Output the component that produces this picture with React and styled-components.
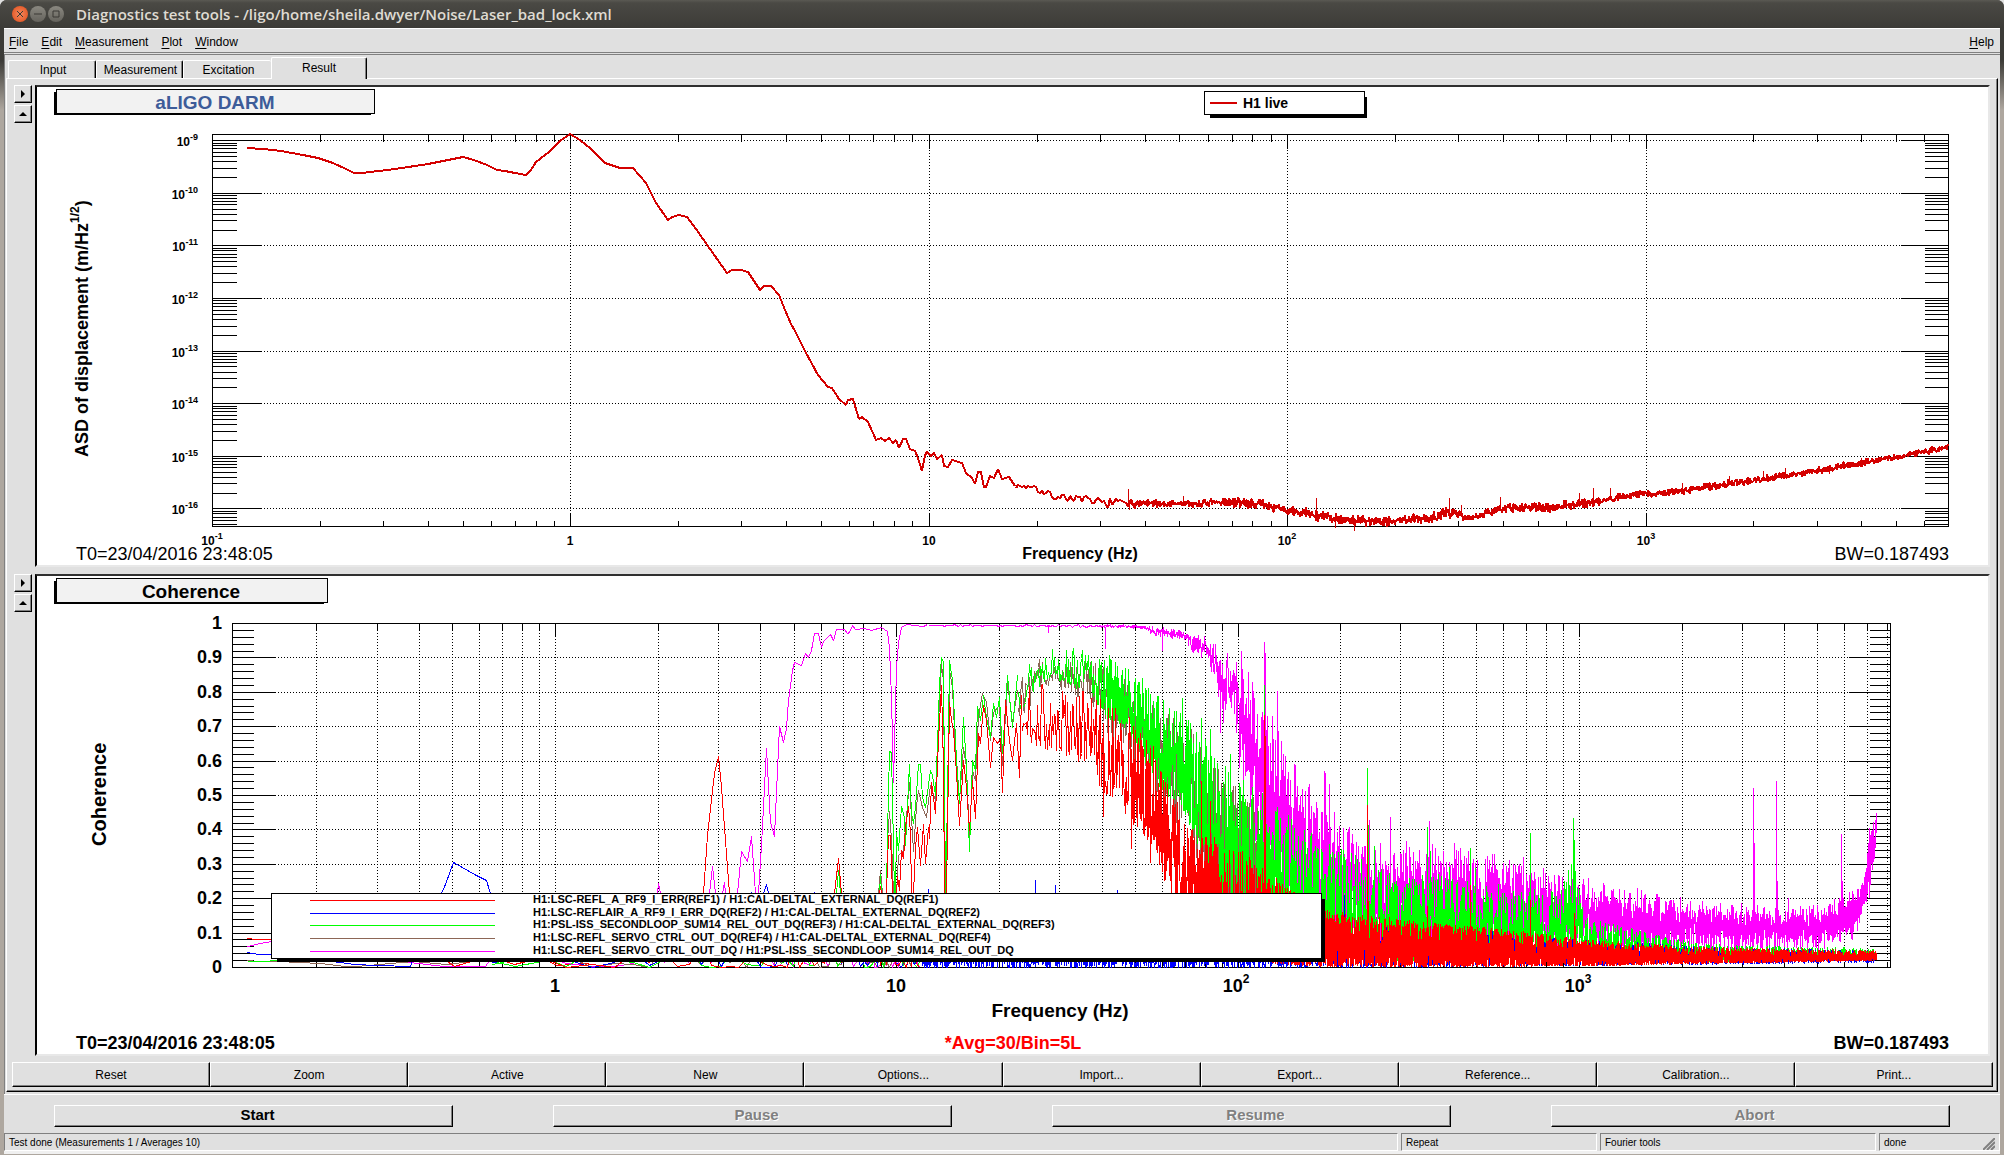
import React from 'react'
import styled, { createGlobalStyle } from 'styled-components';

const GlobalStyle = createGlobalStyle`
    *{
        box-sizing: border-box;
    }
    body{
        margin: 0;
        background: #e0e0e0;
        font-family: "Liberation Sans", Arial, sans-serif;
        font-size: 12px;
        color: #000;
    }
    button{
        font: inherit;
        color: inherit;
        padding: 0;
        margin: 0;
        border-radius: 0;
    }
`;

const RED = '#ff0000';
const BLUE = '#0000ff';
const GREEN = '#00ff00';
const BROWN = '#8c6656';
const MAGENTA = '#ff00ff';
const LIVE = '#d40000';

/* ---------- curve data, in plot units ---------- */

const asdLine = [
    [247, 148], [263, 149], [281, 151], [303, 155], [318, 158], [333, 163], [346, 169], [354, 173],
    [362, 173], [395, 169], [428, 164], [448, 160], [463, 157], [474, 160], [487, 165], [497, 170],
    [505, 171], [515, 173], [526, 175], [531, 170], [536, 162], [549, 152], [560, 141], [570, 134],
    [580, 140], [591, 149], [605, 163], [620, 168], [633, 168], [646, 183], [656, 203], [668, 220],
    [672, 217], [679, 215], [687, 217], [696, 229], [710, 249], [727, 273], [732, 270], [741, 270],
    [748, 272], [760, 290], [764, 286], [771, 286], [779, 295], [785, 310], [791, 324], [795, 331],
    [805, 351], [818, 375], [828, 387], [832, 388], [839, 399], [846, 405], [848, 400], [853, 399],
    [859, 419], [862, 417], [868, 422], [873, 433], [876, 440], [881, 438], [885, 441], [889, 438],
    [893, 443], [896, 440], [899, 448], [903, 439], [906, 439], [910, 449], [915, 451], [918, 458],
    [922, 471], [925, 455], [927, 452], [931, 456], [934, 453], [937, 459], [942, 455], [944, 466],
    [948, 467], [952, 460], [962, 463], [966, 473], [972, 478], [975, 484], [978, 472], [981, 472],
    [984, 487], [986, 487], [990, 476], [994, 478], [998, 469], [1002, 479], [1009, 477], [1015, 486],
];

// [x, top, bottom] of the noisy part
const asdBand = [
    [1016, 484, 488], [1035, 484, 489], [1040, 488, 495], [1048, 489, 502], [1070, 493, 502],
    [1090, 496, 507], [1130, 498, 509], [1200, 499, 509], [1226, 496, 508], [1259, 497, 510],
    [1286, 505, 516], [1313, 507, 522], [1351, 514, 527], [1395, 514, 528], [1433, 510, 524],
    [1449, 505, 520], [1460, 506, 519], [1465, 514, 523], [1479, 510, 520], [1498, 504, 516],
    [1504, 502, 515], [1553, 501, 513], [1591, 496, 508], [1613, 493, 504], [1643, 488, 498],
    [1654, 490, 499], [1727, 479, 489], [1798, 469, 479], [1858, 459, 468], [1912, 450, 458],
    [1948, 443, 451],
];
const asdSpikes = [
    [1128, 489], [1129, 510], [1183, 496], [1316, 498], [1335, 528], [1354, 531], [1449, 498],
    [1461, 505], [1500, 497], [1579, 493], [1593, 488], [1610, 488], [1682, 483], [1729, 476],
    [1763, 471], [1785, 468], [1829, 474], [1861, 458],
];

const blueLine = [
    [441, 893], [445, 884], [453, 862], [462, 867], [474, 874], [486, 880], [490, 893],
];

const magentaLine = [
    [737, 893], [741, 851], [747, 861], [751, 836], [755, 893], [758, 893], [761, 845], [766, 748],
    [770, 822], [774, 836], [779, 726], [783, 742], [786, 728], [788, 700], [792, 670], [794, 662],
    [801, 665], [805, 653], [808, 657], [811, 650], [814, 633], [818, 633], [821, 647], [823, 641],
    [830, 634], [833, 640], [836, 629], [844, 629], [847, 633], [849, 632], [852, 625], [855, 629],
    [864, 628], [871, 630], [881, 627], [887, 631], [889, 648], [891, 697], [893, 782], [896, 667],
    [898, 642], [899, 637], [901, 627], [906, 624], [914, 625], [923, 626], [927, 624],
];

const greenLine = [
    [886, 893], [887, 833], [889, 751], [891, 752], [892, 800], [894, 893], [895, 893], [896, 832],
    [898, 850], [901, 806], [904, 817], [905, 845], [909, 764], [911, 813], [913, 823], [915, 807],
    [918, 764], [920, 764], [922, 797], [925, 807], [927, 792], [930, 770], [932, 775], [935, 795],
    [938, 717], [939, 683], [941, 657], [943, 662], [944, 787], [945, 893], [947, 800], [949, 660],
    [952, 680], [954, 717], [956, 760], [959, 803], [963, 717], [966, 767], [969, 851], [972, 760],
    [975, 770], [977, 706], [980, 720], [983, 695], [986, 717], [990, 737], [993, 703], [996, 717],
    [999, 697], [1002, 753], [1007, 675], [1012, 727], [1017, 675],
];

const brownLine = [
    [886, 893], [887, 840], [889, 811], [891, 840], [893, 893], [896, 893], [898, 855], [903, 850],
    [909, 782], [913, 851], [916, 806], [918, 790], [922, 807], [926, 817], [930, 785], [935, 800],
    [939, 700], [941, 664], [943, 680], [945, 893], [947, 820], [949, 670], [952, 687], [954, 730],
    [959, 800], [963, 747], [966, 767], [969, 840], [972, 770], [975, 780], [978, 716], [982, 693],
    [986, 702], [990, 740], [993, 712], [999, 705], [1002, 765], [1007, 683], [1012, 722], [1017, 690],
];

const redPeak = [
    [703, 893], [707, 835], [712, 790], [714, 773], [718, 756], [721, 787], [724, 827], [729, 893],
];

const redLine = [
    [886, 893], [888, 835], [890, 835], [892, 893], [896, 893], [897, 876], [899, 890], [901, 850],
    [903, 858], [905, 827], [908, 806], [910, 833], [911, 893], [913, 893], [915, 847], [917, 827],
    [920, 865], [923, 824], [925, 863], [928, 827], [929, 838], [931, 782], [935, 813], [938, 740],
    [941, 685], [943, 767], [944, 893], [946, 893], [949, 702], [951, 720], [953, 730], [956, 773],
    [959, 825], [963, 760], [966, 787], [969, 830], [972, 780], [975, 818], [978, 733], [980, 743],
    [983, 705], [986, 720], [990, 767], [993, 737], [997, 743], [1000, 738], [1002, 792], [1005, 700],
    [1009, 740], [1012, 760], [1016, 723], [1019, 777], [1021, 695],
];

const magentaBand = [
    [928, 624, 626], [1100, 624, 627], [1140, 624, 628], [1155, 625, 636], [1183, 627, 640],
    [1192, 630, 655], [1204, 632, 662], [1212, 638, 676], [1218, 646, 705], [1224, 640, 720],
    [1234, 648, 722], [1240, 655, 790], [1250, 668, 825], [1258, 690, 850], [1266, 705, 880],
    [1276, 720, 910], [1290, 755, 940], [1310, 785, 950], [1330, 805, 955], [1360, 830, 960],
    [1400, 842, 960], [1440, 838, 960], [1500, 852, 960], [1550, 865, 958], [1580, 872, 955],
    [1620, 884, 956], [1680, 893, 956], [1740, 900, 957], [1780, 904, 953], [1820, 901, 950],
    [1850, 890, 944], [1860, 878, 930], [1865, 860, 915], [1869, 828, 900], [1873, 812, 870],
    [1876, 806, 864],
];
const magentaSpikes = [
    [1048, 632], [1105, 648], [1162, 650], [1220, 732], [1223, 722], [1241, 650], [1248, 671],
    [1252, 681], [1264, 641], [1265, 652], [1272, 715], [1277, 690], [1278, 730], [1282, 769],
    [1294, 763], [1295, 764], [1309, 783], [1315, 826], [1324, 770], [1325, 772], [1329, 783],
    [1334, 811], [1349, 826], [1369, 819], [1380, 842], [1390, 816], [1406, 840], [1429, 820],
    [1438, 855], [1468, 850], [1494, 853], [1506, 872], [1523, 856], [1592, 887], [1619, 888],
    [1637, 887], [1658, 896], [1732, 904], [1753, 787], [1754, 842], [1776, 780], [1777, 880],
    [1788, 897], [1817, 904], [1841, 833], [1842, 880], [1869, 827],
];

const greenBand = [
    [1018, 668, 712], [1035, 650, 692], [1050, 645, 676], [1080, 648, 690], [1097, 652, 705],
    [1110, 658, 722], [1128, 668, 730], [1140, 680, 752], [1160, 695, 790], [1180, 708, 805],
    [1200, 728, 850], [1220, 760, 890], [1237, 775, 920], [1260, 790, 945], [1290, 815, 955],
    [1320, 840, 960], [1350, 850, 960], [1400, 880, 960], [1430, 870, 960], [1500, 890, 960],
    [1560, 888, 960], [1572, 860, 960], [1576, 870, 960], [1583, 915, 960], [1650, 932, 961],
    [1700, 943, 961], [1876, 948, 959],
];
const greenSpikes = [
    [1109, 654], [1142, 677], [1163, 699], [1182, 697], [1201, 717], [1210, 728], [1230, 753],
    [1264, 684], [1275, 810], [1282, 843], [1304, 845], [1334, 853], [1341, 848], [1367, 767],
    [1368, 824], [1374, 845], [1412, 878], [1427, 826], [1430, 850], [1449, 866], [1470, 847],
    [1475, 867], [1498, 883], [1530, 832], [1573, 817], [1574, 839], [1575, 870],
];

const brownBand = greenBand
    .filter(([x]) => x < 1270)
    .map(([x, top, bottom]) => [x, top + 10, bottom + (x < 1100 ? 8 : 20)]);

const redBand = [
    [1022, 684, 738], [1040, 680, 748], [1060, 680, 752], [1080, 688, 762], [1100, 695, 790],
    [1120, 708, 805], [1140, 725, 835], [1155, 745, 850], [1165, 775, 885], [1180, 805, 910],
    [1200, 830, 945], [1240, 850, 960], [1300, 895, 965], [1325, 910, 966], [1400, 918, 966],
    [1500, 928, 966], [1600, 940, 965], [1700, 946, 963], [1876, 950, 960],
];
const redSpikes = [
    [1103, 816], [1131, 848], [1150, 862], [1201, 780], [1210, 800], [1264, 714], [1265, 735],
    [1367, 804], [1368, 900], [1427, 905], [1470, 884], [1530, 899], [1574, 912], [1575, 925],
];

const blueBand = [
    [920, 945, 967], [1000, 945, 967], [1300, 935, 967], [1400, 930, 967], [1500, 935, 966],
    [1600, 940, 965], [1700, 946, 964], [1876, 950, 962],
];
const blueSpikes = [
    [928, 888], [1035, 879], [1055, 884], [1117, 889], [1176, 892], [1344, 894], [1349, 918],
    [1386, 926], [1492, 930],
];

// quiet floor of every channel below 10 Hz
const floorBand = [[492, 950, 967], [700, 940, 967], [920, 930, 967]];
const floorLines = [
    { color: MAGENTA, points: [[247, 946], [260, 943], [277, 940], [409, 962], [444, 966], [485, 966], [489, 960]] },
    { color: BROWN, points: [[247, 960], [258, 961], [277, 961], [320, 963], [344, 966], [356, 966], [413, 961], [446, 964], [471, 961]] },
    { color: GREEN, points: [[247, 961], [262, 961], [277, 960], [470, 955], [492, 961], [515, 966], [541, 961]] },
    { color: BLUE, points: [[247, 952], [258, 954], [277, 954], [332, 961], [354, 964], [377, 965], [410, 966], [412, 960]] },
    { color: RED, points: [[247, 938], [256, 939], [277, 939], [447, 961], [454, 966], [471, 961], [505, 961], [514, 964], [526, 961], [549, 961], [556, 965], [589, 963]] },
];

/* ---------- helpers ---------- */

const random = (seed) => {
    let s = seed;
    return () => {
        s = (s + 0x6d2b79f5) | 0;
        let t = Math.imul(s ^ (s >>> 15), 1 | s);
        t = (t + Math.imul(t ^ (t >>> 7), 61 | t)) ^ t;
        return ((t ^ (t >>> 14)) >>> 0) / 4294967296;
    };
};

const toPath = (points) => points.map(([x, y], i) => `${i ? 'L' : 'M'}${x} ${y}`).join('');

const spikePath = (spikes, base) => spikes.map(([x, y]) => `M${x} ${y}V${base(x)}`).join('');

const bandAt = (band, x) => {
    let i = 1;
    while (i < band.length - 1 && band[i][0] < x) i += 1;
    const [x0, t0, b0] = band[i - 1];
    const [x1, t1, b1] = band[i];
    const k = Math.min(1, Math.max(0, (x - x0) / (x1 - x0)));
    return [t0 + (t1 - t0) * k, b0 + (b1 - b0) * k];
};

// Samples sit at a constant step in Hz, so they crowd together along the log axis.
// Each one is snapped to its pixel column; "centred" keeps most of them mid-band.
const noise = (band, seed, { step, skew = 1, end, centred }) => {
    const next = random(seed);
    const points = [];
    const last = end || band[band.length - 1][0];
    let x = band[0][0];
    while (x <= last) {
        const [top, bottom] = bandAt(band, x);
        const r = centred ? (next() + next()) / 2 : next();
        points.push([Math.round(x), Math.round(bottom - (bottom - top) * r ** skew)]);
        x += step(x);
    }
    return toPath(points);
};

const fineStep = (x) => Math.max(0.25, 27.8 / 10 ** ((x - 555) / 341.3));
const evenStep = () => 0.5;

const middle = (band) => (x) => {
    const [top, bottom] = bandAt(band, x);
    return Math.round((top + bottom) / 2);
};

/* ---------- plots ---------- */

const SUBS = [2, 3, 4, 5, 6, 7, 8, 9];

const Power = ({ x, y, size, sup, exp, anchor = 'middle' }) => (
    <Label x={x} y={y} $size={size} textAnchor={anchor}>
        10<tspan dy={-Math.round(size / 2)} fontSize={sup}>{exp}</tspan>
    </Label>
);

const AsdPlot = () => {
    const left = 212;
    const right = 1948;
    const top = 134;
    const bottom = 526;
    const fx = (f) => Math.round(212 + 358.4 * (Math.log10(f) + 1));
    const fy = (v) => Math.round(140.2 + 52.6 * v);

    const xMinor = [];
    [0.1, 1, 10, 100, 1000].forEach((d) => SUBS.forEach((s) => {
        if (d * s < 7000) xMinor.push(fx(d * s));
    }));
    const yMinor = [];
    [1, 2, 3, 4, 5, 6, 7, 8].forEach((d) => SUBS.forEach((s) => {
        const y = fy(d - Math.log10(s));
        if (y < bottom) yMinor.push(y);
    }));
    const decades = [1, 10, 100, 1000].map(fx);
    const powers = [0, 1, 2, 3, 4, 5, 6, 7];

    return (
        <Plot viewBox="37 87 1951 478" role="img" aria-label="aLIGO DARM">
            <path d="M54 92H371V115H54Z" />
            <TitleBox x="56" y="89" width="318" height="24" />
            <Label x="215" y="109" $size={19} $color="#3d5c99" textAnchor="middle">aLIGO DARM</Label>

            <path d="M1210 97H1367V118H1210Z" />
            <LegendBox x="1204" y="91" width="160" height="23" />
            <path d="M1210 103H1237" stroke={LIVE} strokeWidth="2" />
            <Label x="1243" y="108" $size={14}>H1 live</Label>

            <g transform="translate(0.5 0.5)">
                <Grid d={decades.map((x) => `M${x} ${top}V${bottom}`).join('') + powers.map((p) => `M${left} ${fy(p)}H${right}`).join('')} />
                <Axis d={
                    `M${left} ${top}H${right}V${bottom}H${left}Z`
                    + xMinor.map((x) => `M${x} ${top}v7M${x} ${bottom}v-6`).join('')
                    + decades.map((x) => `M${x} ${top}v14M${x} ${bottom}v-14`).join('')
                    + yMinor.map((y) => `M${left} ${y}h24M${right} ${y}h-24`).join('')
                    + powers.map((p) => `M${left} ${fy(p)}h48M${right} ${fy(p)}h-48`).join('')
                } />
            </g>

            <Trace $color={LIVE} $width={2} d={toPath(asdLine)} />
            <Trace $color={LIVE} $width={2} d={noise(asdBand, 7, { step: (x) => (x < 1130 ? 2 : 0.4), centred: true })} />
            <Trace $color={LIVE} d={spikePath(asdSpikes, middle(asdBand))} />

            {powers.map((p) => (
                <Power key={p} x={198} y={fy(p) + 6} size={12} sup={9} exp={`-${p + 9}`} anchor="end" />
            ))}
            <Power x={212} y={545} size={12} sup={9} exp="-1" />
            <Label x="570" y="545" $size={12} textAnchor="middle">1</Label>
            <Label x="929" y="545" $size={12} textAnchor="middle">10</Label>
            <Power x={1287} y={545} size={12} sup={9} exp="2" />
            <Power x={1646} y={545} size={12} sup={9} exp="3" />

            <Label x="1080" y="559" $size={16} textAnchor="middle">Frequency (Hz)</Label>
            <Label $size={18} transform="translate(88 457) rotate(-90)">
                ASD of displacement (m/Hz<tspan dy="-9" fontSize="12">1/2</tspan><tspan dy="9">)</tspan>
            </Label>
            <Label x="76" y="560" $size={18} $weight={400}>T0=23/04/2016 23:48:05</Label>
            <Label x="1949" y="560" $size={18} $weight={400} textAnchor="end">BW=0.187493</Label>
        </Plot>
    );
};

const channels = [
    { color: RED, name: 'H1:LSC-REFL_A_RF9_I_ERR(REF1) / H1:CAL-DELTAL_EXTERNAL_DQ(REF1)' },
    { color: BLUE, name: 'H1:LSC-REFLAIR_A_RF9_I_ERR_DQ(REF2) / H1:CAL-DELTAL_EXTERNAL_DQ(REF2)' },
    { color: GREEN, name: 'H1:PSL-ISS_SECONDLOOP_SUM14_REL_OUT_DQ(REF3) / H1:CAL-DELTAL_EXTERNAL_DQ(REF3)' },
    { color: BROWN, name: 'H1:LSC-REFL_SERVO_CTRL_OUT_DQ(REF4) / H1:CAL-DELTAL_EXTERNAL_DQ(REF4)' },
    { color: MAGENTA, name: 'H1:LSC-REFL_SERVO_CTRL_OUT_DQ / H1:PSL-ISS_SECONDLOOP_SUM14_REL_OUT_DQ' },
];

const CoherencePlot = () => {
    const left = 232;
    const right = 1890;
    const top = 623;
    const bottom = 967;
    const fx = (f) => Math.round(555 + 341.3 * Math.log10(f));
    const fy = (v) => Math.round(967 - 344 * v);

    const xMinor = [];
    [0.1, 1, 10, 100, 1000].forEach((d) => SUBS.forEach((s) => {
        if (d * s < 8190) xMinor.push(fx(d * s));
    }));
    const decades = [1, 10, 100, 1000].map(fx);
    const tenths = [1, 2, 3, 4, 5, 6, 7, 8, 9].map((n) => fy(n / 10));
    const yMinor = Array.from({ length: 49 }, (_, i) => fy((i + 1) / 50));
    const labels = ['0', '0.1', '0.2', '0.3', '0.4', '0.5', '0.6', '0.7', '0.8', '0.9', '1'];
    const quiet = { step: fineStep, skew: 2, end: 920 };

    return (
        <Plot viewBox="37 576 1951 478" role="img" aria-label="Coherence">
            <path d="M54 581H324V604H54Z" />
            <TitleBox x="56" y="578" width="271" height="24" />
            <Label x="191" y="598" $size={19} textAnchor="middle">Coherence</Label>

            <g transform="translate(0.5 0.5)">
                <Grid d={[...xMinor, ...decades].map((x) => `M${x} ${top}V${bottom}`).join('') + tenths.map((y) => `M${left} ${y}H${right}`).join('')} />
                <Axis d={
                    `M${left} ${top}H${right}V${bottom}H${left}Z`
                    + xMinor.map((x) => `M${x} ${top}v6M${x} ${bottom}v-6`).join('')
                    + decades.map((x) => `M${x} ${top}v12M${x} ${bottom}v-12`).join('')
                    + yMinor.map((y) => `M${left} ${y}h21M${right} ${y}h-21`).join('')
                    + tenths.map((y) => `M${left} ${y}h42M${right} ${y}h-42`).join('')
                } />

                {floorLines.map(({ color, points }) => (
                    <Trace key={color} $color={color} d={toPath(points)} />
                ))}
                {floorLines.map(({ color }, i) => (
                    <Trace key={color} $color={color} d={noise(floorBand, 30 + i, quiet)} />
                ))}

                <Trace $color={MAGENTA} d="M657 893L658 883L660 893M709 893L712 866L715 893M722 893L724 882L725 893" />
                <Trace $color={MAGENTA} d={toPath(magentaLine)} />
                <Trace $color={MAGENTA} d={noise(magentaBand, 11, { step: (x) => (x < 1100 ? 2 : x < 1240 ? 0.4 : 0.15), centred: true })} />
                <Trace $color={MAGENTA} d={spikePath(magentaSpikes, middle(magentaBand))} />

                <Trace $color={BROWN} d="M878 893L880 870L882 893" />
                <Trace $color={BROWN} d={toPath(brownLine)} />
                <Trace $color={BROWN} d={noise(brownBand, 12, { step: fineStep })} />

                <Trace $color={GREEN} d="M836 893L838 870L840 893M879 893L880 874L881 893" />
                <Trace $color={GREEN} d={toPath(greenLine)} />
                <Trace $color={GREEN} d={noise(greenBand, 13, { step: (x) => (x < 1100 ? fineStep(x) : 0.25), skew: 1.4 })} />
                <Trace $color={GREEN} d={spikePath(greenSpikes, middle(greenBand))} />

                <Trace $color={BLUE} d={toPath(blueLine)} />
                <Trace $color={BLUE} d="M763 893L766 884L768 893M751 891V893M814 891V893" />
                <Trace $color={BLUE} d={noise(blueBand, 14, { step: evenStep, skew: 1.6 })} />
                <Trace $color={BLUE} d={spikePath(blueSpikes, middle(blueBand))} />

                <Trace $color={RED} d={toPath(redPeak)} />
                <Trace $color={RED} d="M834 893L838 858L841 893M879 893L880 886L881 893" />
                <Trace $color={RED} d={toPath(redLine)} />
                <Trace $color={RED} d={noise(redBand, 15, { step: (x) => (x < 1130 ? fineStep(x) : x < 1250 ? 0.3 : 0.12), skew: 1.4 })} />
                <Trace $color={RED} d={spikePath(redSpikes, middle(redBand))} />
            </g>

            <path d="M277 899H1325V962H277Z" />
            <LegendBox x="271" y="893" width="1050" height="65" />
            {channels.map(({ color, name }, i) => {
                const y = Math.round(900 + i * 12.7);
                return (
                    <g key={name}>
                        <rect x="310" y={y} width="185" height="1" fill={color} />
                        <Label x="533" y={y + 3} $size={11}>{name}</Label>
                    </g>
                );
            })}

            {labels.map((text, i) => (
                <Label key={text} x="222" y={fy(i / 10) + 6} $size={18} textAnchor="end">{text}</Label>
            ))}
            <Label x="555" y="992" $size={18} textAnchor="middle">1</Label>
            <Label x="896" y="992" $size={18} textAnchor="middle">10</Label>
            <Power x={1236} y={992} size={18} sup={12} exp="2" />
            <Power x={1578} y={992} size={18} sup={12} exp="3" />

            <Label x="1060" y="1017" $size={19} textAnchor="middle">Frequency (Hz)</Label>
            <Label $size={20} transform="translate(106 846) rotate(-90)">Coherence</Label>
            <Label x="76" y="1049" $size={18}>T0=23/04/2016 23:48:05</Label>
            <Label x="1013" y="1049" $size={18} $color={RED} textAnchor="middle">*Avg=30/Bin=5L</Label>
            <Label x="1949" y="1049" $size={18} textAnchor="end">BW=0.187493</Label>
        </Plot>
    );
};

const PlotPad = ({ children }) => (
    <PadRow>
        <PadTools>
            <PadButton aria-label="Show options">
                <svg width="16" height="16" viewBox="0 0 16 16"><path d="M6 4L10 8L6 12Z" /></svg>
            </PadButton>
            <PadButton aria-label="Move up">
                <svg width="16" height="16" viewBox="0 0 16 16"><path d="M4 10L8 6L12 10Z" /></svg>
            </PadButton>
        </PadTools>
        <Canvas>{children}</Canvas>
    </PadRow>
);

const menus = ['File', 'Edit', 'Measurement', 'Plot', 'Window'];
const tabs = [
    { name: 'Input', width: 88 },
    { name: 'Measurement', width: 87 },
    { name: 'Excitation', width: 88 },
    { name: 'Result', width: 96, active: true },
];
const actions = ['Reset', 'Zoom', 'Active', 'New', 'Options...', 'Import...', 'Export...', 'Reference...', 'Calibration...', 'Print...'];
const runs = ['Start', 'Pause', 'Resume', 'Abort'];

const MenuItem = ({ name }) => (
    <MenuButton><u>{name[0]}</u>{name.slice(1)}</MenuButton>
);

const App = () => {
    return (
        <Window>
            <GlobalStyle />
            <TitleBar>
                <WindowButton aria-label="Close" $close>
                    <svg width="16" height="16" viewBox="0 0 16 16"><path d="M5 5L11 11M11 5L5 11" /></svg>
                </WindowButton>
                <WindowButton aria-label="Minimize">
                    <svg width="16" height="16" viewBox="0 0 16 16"><path d="M4 8H12" /></svg>
                </WindowButton>
                <WindowButton aria-label="Maximize">
                    <svg width="16" height="16" viewBox="0 0 16 16"><path d="M5 5H11V11H5Z" /></svg>
                </WindowButton>
                <h1>Diagnostics test tools - /ligo/home/sheila.dwyer/Noise/Laser_bad_lock.xml</h1>
            </TitleBar>
            <Content>
                <MenuBar>
                    {menus.map((name) => <MenuItem key={name} name={name} />)}
                    <Spacer />
                    <MenuItem name="Help" />
                </MenuBar>
                <Main>
                    <TabBar role="tablist">
                        {tabs.map(({ name, width, active }) => (
                            <Tab key={name} role="tab" aria-selected={!!active} $width={width} $active={active}>{name}</Tab>
                        ))}
                    </TabBar>
                    <Pane>
                        <Pads>
                            <PlotPad><AsdPlot /></PlotPad>
                            <PlotPad><CoherencePlot /></PlotPad>
                        </Pads>
                        <ActionRow>
                            {actions.map((name) => <ActionButton key={name}>{name}</ActionButton>)}
                        </ActionRow>
                    </Pane>
                </Main>
                <RunRow>
                    {runs.map((name, i) => <RunButton key={name} disabled={i > 0}>{name}</RunButton>)}
                </RunRow>
                <StatusBar>
                    <Status>Test done (Measurements 1 / Averages 10)</Status>
                    <Status $width={196}>Repeat</Status>
                    <Status $width={276}>Fourier tools</Status>
                    <Status $width={121}>
                        done
                        <Grip width="12" height="12" viewBox="0 0 12 12">
                            <path d="M0 12L12 0M4 12L12 4M8 12L12 8" stroke="#808080" strokeWidth="2" />
                        </Grip>
                    </Status>
                </StatusBar>
            </Content>
        </Window>
    )
}

const Window = styled.div`
    min-height: 100vh;
    display: flex;
    flex-direction: column;
    border-radius: 7px 7px 0 0;
    overflow: hidden;
    background: linear-gradient(#3c3b37 28px, #3c3b37 60px, #aea79f 110px);
`;

const TitleBar = styled.header`
    height: 28px;
    padding-left: 12px;
    display: flex;
    align-items: center;
    gap: 2px;
    background: linear-gradient(#5a5953, #4a4944 3px, #3c3b37);
    h1{
        margin: 0 0 0 10px;
        font: 600 15px/20px "Open Sans", "Noto Sans", sans-serif;
        color: #dfdbd2;
        white-space: nowrap;
    }
`;

const WindowButton = styled.button`
    width: 16px;
    height: 16px;
    display: flex;
    border: 0;
    border-radius: 50%;
    background: ${({ $close }) => ($close ? 'radial-gradient(#f58a60, #df4a16)' : 'linear-gradient(#8a8880, #65635d)')};
    path{
        fill: none;
        stroke: #3a3934;
    }
`;

const Content = styled.div`
    flex: 1;
    margin: 0 4px;
    display: flex;
    flex-direction: column;
    background: #e0e0e0;
    border-bottom: 1px solid #aea79f;
`;

const MenuBar = styled.nav`
    height: 25px;
    padding: 2px 6px 0 5px;
    display: flex;
    align-items: center;
    gap: 13px;
    border-top: 1px solid #fff;
    border-bottom: 1px solid #808080;
`;

const MenuButton = styled.button`
    border: 0;
    background: none;
    line-height: 16px;
    u{
        text-underline-offset: 2px;
    }
`;

const Spacer = styled.span`
    flex: 1;
`;

const Main = styled.main`
    flex: 1;
    margin-top: 1px;
    padding: 2px 2px 2px 1px;
    display: flex;
    flex-direction: column;
    border: solid #808080;
    border-width: 1px 0 0 1px;
`;

const TabBar = styled.div`
    height: 21px;
    padding-left: 2px;
    display: flex;
    align-items: flex-end;
`;

const Tab = styled.button`
    width: ${({ $width }) => $width}px;
    height: ${({ $active }) => ($active ? 22 : 18)}px;
    margin-bottom: ${({ $active }) => ($active ? -1 : 0)}px;
    padding-bottom: ${({ $active }) => ($active ? 2 : 0)}px;
    padding-left: ${({ $active }) => ($active ? 0 : 2)}px;
    line-height: 14px;
    background: #e0e0e0;
    border: solid #fff;
    border-width: 1px 1px 0 1px;
    border-right-color: #000;
    border-radius: 2px 2px 0 0;
    box-shadow: inset -1px 0 #808080;
    z-index: 1;
    &:nth-child(3){
        border-right: 0;
        box-shadow: none;
    }
`;

const Pane = styled.section`
    flex: 1;
    padding: 6px 0 4px;
    display: flex;
    flex-direction: column;
    gap: 6px;
    border: 1px solid #fff;
    border-right-color: #000;
    border-bottom-color: #000;
    box-shadow: inset -1px -1px #808080;
`;

const Pads = styled.div`
    display: flex;
    flex-direction: column;
    gap: 7px;
`;

const PadRow = styled.div`
    padding: 0 7px;
    display: flex;
    gap: 3px;
`;

const PadTools = styled.div`
    width: 18px;
    display: flex;
    flex-direction: column;
    gap: 2px;
`;

const raised = `
    background: #e0e0e0;
    border: 1px solid #fff;
    border-right-color: #000;
    border-bottom-color: #000;
    box-shadow: inset -1px -1px #808080;
`;

const PadButton = styled.button`
    ${raised}
    width: 18px;
    height: 18px;
    display: flex;
`;

const Canvas = styled.div`
    flex: 1;
    background: #fff;
    border: 2px solid #000;
    border-top-color: #303030;
    border-right-color: #e8e8e8;
    border-bottom-color: #e8e8e8;
`;

const Plot = styled.svg`
    display: block;
    width: 100%;
    height: auto;
    shape-rendering: crispEdges;
`;

const Label = styled.text`
    font-family: "Liberation Sans", Arial, sans-serif;
    font-size: ${({ $size }) => $size}px;
    font-weight: ${({ $weight }) => $weight || 700};
    fill: ${({ $color }) => $color || '#000'};
`;

const TitleBox = styled.rect`
    fill: #f2f2f2;
    stroke: #000;
`;

const LegendBox = styled.rect`
    fill: #fff;
    stroke: #000;
`;

const Grid = styled.path`
    fill: none;
    stroke: #000;
    stroke-dasharray: 1 2;
`;

const Axis = styled.path`
    fill: none;
    stroke: #000;
`;

const Trace = styled.path`
    fill: none;
    stroke: ${({ $color }) => $color};
    stroke-width: ${({ $width }) => $width || 1}px;
    stroke-linejoin: bevel;
`;

const ActionRow = styled.div`
    margin-top: auto;
    padding: 0 4px 0 5px;
    display: grid;
    grid-template-columns: repeat(10, 1fr);
`;

const ActionButton = styled.button`
    ${raised}
    height: 25px;
`;

const RunRow = styled.div`
    padding: 10px 0 6px;
    display: grid;
    grid-template-columns: repeat(4, 1fr);
    border-top: 1px solid #fff;
`;

const RunButton = styled.button`
    ${raised}
    height: 22px;
    margin: 0 50px;
    padding: 0 0 2px 8px;
    font-size: 15px;
    font-weight: 700;
    line-height: 18px;
    &:disabled{
        color: #808080;
        text-shadow: 1px 1px #fff;
    }
`;

const StatusBar = styled.footer`
    display: flex;
    gap: 3px;
    border-bottom: 3px solid #f0f0f0;
`;

const Status = styled.div`
    flex: ${({ $width }) => ($width ? `0 0 ${$width}px` : '1')};
    height: 18px;
    padding: 0 4px;
    display: flex;
    align-items: center;
    justify-content: space-between;
    font-size: 10px;
    border: 1px solid #808080;
    border-right-color: #fff;
    border-bottom-color: #fff;
`;

const Grip = styled.svg`
    align-self: flex-end;
`;

export default App;
